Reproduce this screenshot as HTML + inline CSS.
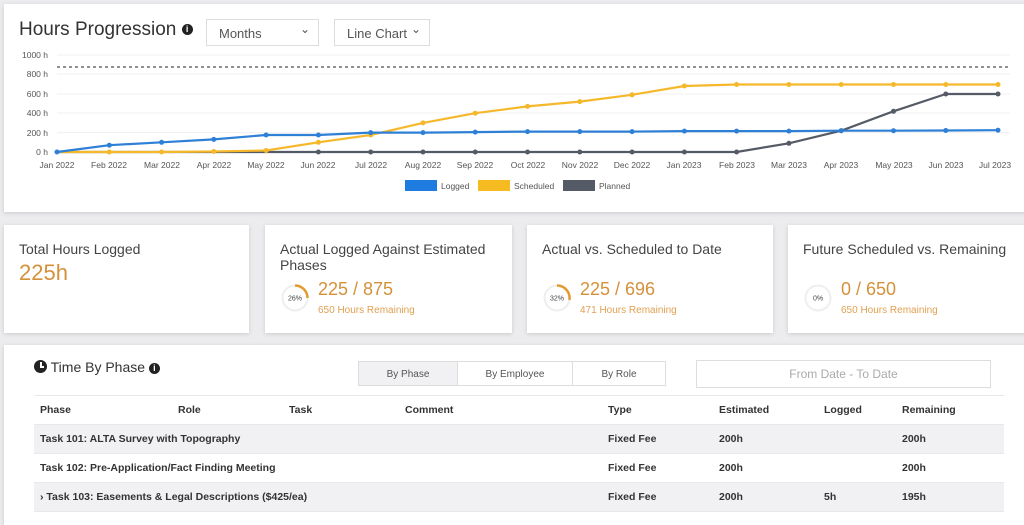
<!DOCTYPE html>
<html><head><meta charset="utf-8"><style>
body{margin:0;width:1024px;height:515px;background:#ececee;font-family:"Liberation Sans",sans-serif;overflow:hidden;position:relative;color:#333}
.card{position:absolute;background:#fff;box-shadow:0 1px 4px rgba(0,0,0,.15)}
.sel{position:absolute;top:19px;height:27px;border:1px solid #ddd;background:#fff;font-size:13px;color:#555;line-height:27px;padding-left:12px;box-sizing:border-box}
.sel:after{content:"⌄";position:absolute;right:8px;top:-4px;font-size:12px}
.st h3{margin:0;font-weight:normal;font-size:14px;color:#444;line-height:16px}
.big{color:#d4913a;font-size:18px}
.rem{color:#e0a050;font-size:10px}
.ring{position:absolute;width:28px;height:28px}
.tab{position:absolute;top:361px;height:25px;border:1px solid #ddd;font-size:10px;color:#555;line-height:25px;text-align:center;box-sizing:border-box;background:#fff}
table{position:absolute;left:34px;top:396px;width:970px;border-collapse:collapse;font-size:10.5px;font-weight:bold;color:#333}
td{height:28px;padding:0 0 0 6px;border-bottom:1px solid #e8e8e8}
tr.g td{background:#f1f1f3}
</style></head><body>
<div class="card" style="left:4px;top:4px;width:1030px;height:208px"></div>
<div style="position:absolute;left:19px;top:19px;font-size:19px;color:#333">Hours Progression <span style="display:inline-block;width:11px;height:11px;border-radius:50%;background:#222;color:#fff;font-size:9px;line-height:11px;text-align:center;vertical-align:3px;font-weight:bold">i</span></div>
<div class="sel" style="left:206px;width:113px">Months</div>
<div class="sel" style="left:334px;width:96px">Line Chart</div>
<svg style="position:absolute;left:0;top:0" width="1024" height="200" font-family="Liberation Sans" font-size="8.5" fill="#555">
<g stroke="#f0f0f0" stroke-width="1"><line x1="57" y1="55" x2="1010" y2="55"/><line x1="57" y1="74" x2="1010" y2="74"/><line x1="57" y1="94" x2="1010" y2="94"/><line x1="57" y1="113" x2="1010" y2="113"/><line x1="57" y1="132.6" x2="1010" y2="132.6"/></g>
<g text-anchor="end"><text x="48" y="58">1000 h</text><text x="48" y="77">800 h</text><text x="48" y="97">600 h</text><text x="48" y="116">400 h</text><text x="48" y="136">200 h</text><text x="48" y="155">0 h</text></g>
<line x1="57" y1="67" x2="1010" y2="67" stroke="#222" stroke-dasharray="3,3"/>
<g text-anchor="middle"><text x="57" y="168">Jan 2022</text><text x="109" y="168">Feb 2022</text><text x="162" y="168">Mar 2022</text><text x="214" y="168">Apr 2022</text><text x="266" y="168">May 2022</text><text x="318" y="168">Jun 2022</text><text x="371" y="168">Jul 2022</text><text x="423" y="168">Aug 2022</text><text x="475" y="168">Sep 2022</text><text x="528" y="168">Oct 2022</text><text x="580" y="168">Nov 2022</text><text x="632" y="168">Dec 2022</text><text x="684" y="168">Jan 2023</text><text x="737" y="168">Feb 2023</text><text x="789" y="168">Mar 2023</text><text x="841" y="168">Apr 2023</text><text x="894" y="168">May 2023</text><text x="946" y="168">Jun 2023</text><text x="995" y="168">Jul 2023</text></g>
<g fill="none" stroke-width="2.2" stroke-linejoin="round">
<polyline stroke="#555b66" points="57,152 736.6,152 788.9,143.3 841.2,130.7 893.5,111.3 945.8,94 998,94"/>
<polyline stroke="#f5b82a" points="57,152 109.3,152 161.6,152 213.8,151.5 266.1,150.5 318.4,142.3 370.7,135 423,122.9 475.2,113.2 527.5,106.4 579.8,101.6 632.1,94.8 684.4,86 736.6,84.5 998,84.5"/>
<polyline stroke="#2e7fd6" points="57,152 109.3,145.2 161.6,142.3 213.8,139.4 266.1,135 318.4,135 370.7,132.6 423,132.6 475.2,132.1 527.5,131.6 579.8,131.6 632.1,131.6 684.4,131.1 736.6,131.1 788.9,131.1 841.2,130.7 893.5,130.7 945.8,130.5 998,130.2"/>
</g>
<g fill="#555b66"><circle cx="318.4" cy="152" r="2.5"/><circle cx="370.7" cy="152" r="2.5"/><circle cx="423" cy="152" r="2.5"/><circle cx="475.2" cy="152" r="2.5"/><circle cx="527.5" cy="152" r="2.5"/><circle cx="579.8" cy="152" r="2.5"/><circle cx="632.1" cy="152" r="2.5"/><circle cx="684.4" cy="152" r="2.5"/><circle cx="736.6" cy="152" r="2.5"/><circle cx="788.9" cy="143.3" r="2.5"/><circle cx="841.2" cy="130.7" r="2.5"/><circle cx="893.5" cy="111.3" r="2.5"/><circle cx="945.8" cy="94" r="2.5"/><circle cx="998" cy="94" r="2.5"/></g>
<g fill="#f5b82a"><circle cx="109.3" cy="152" r="2.5"/><circle cx="161.6" cy="152" r="2.5"/><circle cx="213.8" cy="151.5" r="2.5"/><circle cx="266.1" cy="150.5" r="2.5"/><circle cx="318.4" cy="142.3" r="2.5"/><circle cx="370.7" cy="135" r="2.5"/><circle cx="423" cy="122.9" r="2.5"/><circle cx="475.2" cy="113.2" r="2.5"/><circle cx="527.5" cy="106.4" r="2.5"/><circle cx="579.8" cy="101.6" r="2.5"/><circle cx="632.1" cy="94.8" r="2.5"/><circle cx="684.4" cy="86" r="2.5"/><circle cx="736.6" cy="84.5" r="2.5"/><circle cx="788.9" cy="84.5" r="2.5"/><circle cx="841.2" cy="84.5" r="2.5"/><circle cx="893.5" cy="84.5" r="2.5"/><circle cx="945.8" cy="84.5" r="2.5"/><circle cx="998" cy="84.5" r="2.5"/></g>
<g fill="#2e7fd6"><circle cx="57" cy="152" r="2.5"/><circle cx="109.3" cy="145.2" r="2.5"/><circle cx="161.6" cy="142.3" r="2.5"/><circle cx="213.8" cy="139.4" r="2.5"/><circle cx="266.1" cy="135" r="2.5"/><circle cx="318.4" cy="135" r="2.5"/><circle cx="370.7" cy="132.6" r="2.5"/><circle cx="423" cy="132.6" r="2.5"/><circle cx="475.2" cy="132.1" r="2.5"/><circle cx="527.5" cy="131.6" r="2.5"/><circle cx="579.8" cy="131.6" r="2.5"/><circle cx="632.1" cy="131.6" r="2.5"/><circle cx="684.4" cy="131.1" r="2.5"/><circle cx="736.6" cy="131.1" r="2.5"/><circle cx="788.9" cy="131.1" r="2.5"/><circle cx="841.2" cy="130.7" r="2.5"/><circle cx="893.5" cy="130.7" r="2.5"/><circle cx="945.8" cy="130.5" r="2.5"/><circle cx="998" cy="130.2" r="2.5"/></g>
<rect x="405" y="180" width="32" height="11" fill="#1e7be0"/><text x="441" y="189">Logged</text>
<rect x="478" y="180" width="32" height="11" fill="#f7bb22"/><text x="514" y="189">Scheduled</text>
<rect x="563" y="180" width="32" height="11" fill="#555b66"/><text x="599" y="189">Planned</text>
</svg>

<div class="card st" style="left:4px;top:225px;width:245px;height:108px"><div style="padding:16px 15px"><h3>Total Hours Logged</h3><div class="big" style="font-size:22px;margin-top:3px">225h</div></div></div>
<div class="card st" style="left:265px;top:225px;width:247px;height:108px"><div style="padding:16px 15px"><h3>Actual Logged Against Estimated Phases</h3></div>
<svg class="ring" style="left:16px;top:59px" viewBox="0 0 28 28"><circle cx="14" cy="14" r="12.5" fill="none" stroke="#eee" stroke-width="2"/><path d="M14 1.5A12.5 12.5 0 0 1 26.5 14" fill="none" stroke="#e39a2e" stroke-width="2.5"/><text x="14" y="16.5" font-size="7" text-anchor="middle" fill="#444" font-family="Liberation Sans">26%</text></svg>
<div style="position:absolute;left:53px;top:54px" class="big">225 / 875</div><div class="rem" style="position:absolute;left:53px;top:80px">650 Hours Remaining</div></div>
<div class="card st" style="left:527px;top:225px;width:246px;height:108px"><div style="padding:16px 15px"><h3>Actual vs. Scheduled to Date</h3></div>
<svg class="ring" style="left:16px;top:59px" viewBox="0 0 28 28"><circle cx="14" cy="14" r="12.5" fill="none" stroke="#eee" stroke-width="2"/><path d="M14 1.5A12.5 12.5 0 0 1 26.4 16" fill="none" stroke="#e39a2e" stroke-width="2.5"/><text x="14" y="16.5" font-size="7" text-anchor="middle" fill="#444" font-family="Liberation Sans">32%</text></svg>
<div style="position:absolute;left:53px;top:54px" class="big">225 / 696</div><div class="rem" style="position:absolute;left:53px;top:80px">471 Hours Remaining</div></div>
<div class="card st" style="left:788px;top:225px;width:246px;height:108px"><div style="padding:16px 15px"><h3>Future Scheduled vs. Remaining</h3></div>
<svg class="ring" style="left:16px;top:59px" viewBox="0 0 28 28"><circle cx="14" cy="14" r="12.5" fill="none" stroke="#eee" stroke-width="2"/><text x="14" y="16.5" font-size="7" text-anchor="middle" fill="#444" font-family="Liberation Sans">0%</text></svg>
<div style="position:absolute;left:53px;top:54px" class="big">0 / 650</div><div class="rem" style="position:absolute;left:53px;top:80px">650 Hours Remaining</div></div>

<div class="card" style="left:4px;top:345px;width:1030px;height:180px"></div>
<div style="position:absolute;left:34px;top:359px;font-size:14px;color:#333"><span style="display:inline-block;width:13px;height:13px;border-radius:50%;background:#222;vertical-align:-1px;position:relative"><span style="position:absolute;left:6px;top:2px;width:1.5px;height:5px;background:#fff"></span><span style="position:absolute;left:6px;top:6px;width:4px;height:1.5px;background:#fff"></span></span> Time By Phase <span style="display:inline-block;width:11px;height:11px;border-radius:50%;background:#222;color:#fff;font-size:9px;line-height:11px;text-align:center;vertical-align:1px;font-weight:bold">i</span></div>
<div class="tab" style="left:358px;width:100px;background:#f1f1f3">By Phase</div>
<div class="tab" style="left:457px;width:116px">By Employee</div>
<div class="tab" style="left:572px;width:94px">By Role</div>
<div style="position:absolute;left:696px;top:360px;width:295px;height:28px;border:1px solid #ddd;box-sizing:border-box;text-align:center;line-height:26px;font-size:12px;color:#aaa">From Date - To Date</div>
<div style="position:absolute;left:34px;top:395px;width:970px;height:1px;background:#e8e8e8"></div>
<table>
<tr><td style="width:132px">Phase</td><td style="width:105px">Role</td><td style="width:110px">Task</td><td style="width:197px">Comment</td><td style="width:105px">Type</td><td style="width:99px">Estimated</td><td style="width:72px">Logged</td><td>Remaining</td></tr>
<tr class="g"><td colspan="4">Task 101: ALTA Survey with Topography</td><td>Fixed Fee</td><td>200h</td><td></td><td>200h</td></tr>
<tr><td colspan="4">Task 102: Pre-Application/Fact Finding Meeting</td><td>Fixed Fee</td><td>200h</td><td></td><td>200h</td></tr>
<tr class="g"><td colspan="4">› Task 103: Easements &amp; Legal Descriptions ($425/ea)</td><td>Fixed Fee</td><td>200h</td><td>5h</td><td>195h</td></tr>
</table>
</body></html>
